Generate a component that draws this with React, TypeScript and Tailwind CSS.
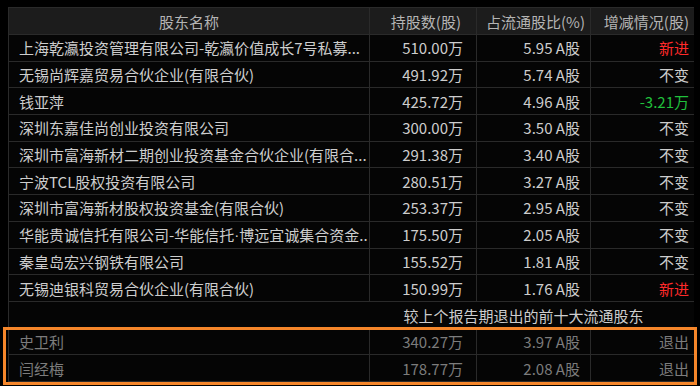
import React from "react";

type Row = { name: React.ReactNode; shares: string; pct: string; change: string; tone: "red" | "green" | "normal" | "exit" };

const rows: Row[] = [
  { name: "上海乾瀛投资管理有限公司-乾瀛价值成长7号私募...", shares: "510.00万", pct: "5.95 A股", change: "新进", tone: "red" },
  { name: "无锡尚辉嘉贸易合伙企业(有限合伙)", shares: "491.92万", pct: "5.74 A股", change: "不变", tone: "normal" },
  { name: "钱亚萍", shares: "425.72万", pct: "4.96 A股", change: "-3.21万", tone: "green" },
  { name: "深圳东嘉佳尚创业投资有限公司", shares: "300.00万", pct: "3.50 A股", change: "不变", tone: "normal" },
  { name: "深圳市富海新材二期创业投资基金合伙企业(有限合...", shares: "291.38万", pct: "3.40 A股", change: "不变", tone: "normal" },
  { name: "宁波TCL股权投资有限公司", shares: "280.51万", pct: "3.27 A股", change: "不变", tone: "normal" },
  { name: "深圳市富海新材股权投资基金(有限合伙)", shares: "253.37万", pct: "2.95 A股", change: "不变", tone: "normal" },
  {
    name: (
      <>
        华能贵诚信托有限公司-华能信托
        <span style={{ fontFamily: '"Liberation Sans", sans-serif' }}>·</span>
        博远宜诚集合资金..
      </>
    ),
    shares: "175.50万",
    pct: "2.05 A股",
    change: "不变",
    tone: "normal",
  },
  { name: "秦皇岛宏兴钢铁有限公司", shares: "155.52万", pct: "1.81 A股", change: "不变", tone: "normal" },
  { name: "无锡迪银科贸易合伙企业(有限合伙)", shares: "150.99万", pct: "1.76 A股", change: "新进", tone: "red" },
];

const exited: Row[] = [
  { name: "史卫利", shares: "340.27万", pct: "3.97 A股", change: "退出", tone: "exit" },
  { name: "闫经梅", shares: "178.77万", pct: "2.08 A股", change: "退出", tone: "exit" },
];

const grid = "grid grid-cols-[361px_107px_114px_104px]";

function DataRow({ r }: { r: Row }) {
  const base = r.tone === "exit" ? "text-[#7c7c7c]" : "text-[#cdcdcd]";
  const changeColor =
    r.tone === "red" ? "text-[#ff2a2a]" : r.tone === "green" ? "text-[#20c03c]" : base;
  return (
    <div className={`${grid} h-[26.7px] border-b border-[#2a2a2a] ${base}`}>
      <div className="border-r border-[#2a2a2a] pl-[10px] pr-[1px] flex items-center overflow-hidden whitespace-nowrap">
        {r.name}
      </div>
      <div className="border-r border-[#2a2a2a] pr-[13px] flex items-center justify-end whitespace-nowrap">
        {r.shares}
      </div>
      <div className="border-r border-[#2a2a2a] pr-[10px] flex items-center justify-end whitespace-nowrap">
        {r.pct}
      </div>
      <div className={`pr-[6px] flex items-center justify-end whitespace-nowrap ${changeColor}`}>{r.change}</div>
    </div>
  );
}

export default function App() {
  return (
    <div
      className="w-[700px] h-[386px] bg-black overflow-hidden pt-[7px] pl-[8px] text-[15px] leading-none"
      style={{ fontFamily: '"Noto Sans CJK SC", "Noto Sans", sans-serif' }}
    >
      <div className="w-[686px] border-l border-[#2a2a2a] border-t border-[#2a2a2a] bg-[#050505]">
        <div className={`${grid} h-[27px] bg-[#1c1c1c] border-b border-[#2a2a2a] text-[#b4b4b4]`}>
          <div className="border-r border-[#2a2a2a] flex items-center justify-center">股东名称</div>
          <div className="border-r border-[#2a2a2a] pr-[15px] flex items-center justify-end whitespace-nowrap">持股数(股)</div>
          <div className="border-r border-[#2a2a2a] pr-[5px] flex items-center justify-end whitespace-nowrap">占流通股比(%)</div>
          <div className="pr-[6px] flex items-center justify-end whitespace-nowrap">增减情况(股)</div>
        </div>
        {rows.map((r, i) => (
          <DataRow key={i} r={r} />
        ))}
        <div className={`${grid} h-[26.7px] text-[#cdcdcd]`}>
          <div />
          <div className="col-span-3 flex items-center justify-center pr-[18px] whitespace-nowrap">
            较上个报告期退出的前十大流通股东
          </div>
        </div>
        <div className="relative">
          {exited.map((r, i) => (
            <DataRow key={i} r={r} />
          ))}
          <div className="absolute left-[-6px] right-[-3px] top-[-2px] bottom-[-3px] border-[3px] border-[#f5862a] pointer-events-none" />
        </div>
      </div>
    </div>
  );
}
